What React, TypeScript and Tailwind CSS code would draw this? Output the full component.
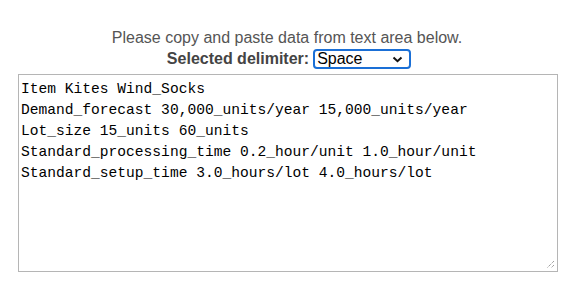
import React from "react";

const data = `Item Kites Wind_Socks
Demand_forecast 30,000_units/year 15,000_units/year
Lot_size 15_units 60_units
Standard_processing_time 0.2_hour/unit 1.0_hour/unit
Standard_setup_time 3.0_hours/lot 4.0_hours/lot`;

export default function App() {
  return (
    <div className="w-[574px] h-[284px] bg-white pt-[28px] font-['Liberation_Sans',Arial,sans-serif] text-[16px]">
      <div className="text-center text-[#555555] leading-[19px]">
        Please copy and paste data from text area below.
      </div>
      <div className="flex items-center justify-center gap-[4px] mt-[1px] h-[21px] pl-[4px]">
        <span className="font-bold text-[#444444] leading-[19px]">Selected delimiter:</span>
        <div className="relative w-[98px] h-[20px] rounded-[4px] border-2 border-[#1a6fd6] bg-white flex items-center">
          <span className="pl-[2px] text-black leading-[16px]">Space</span>
          <svg className="absolute right-[6px] top-[5px]" width="11" height="7" viewBox="0 0 11 7">
            <path d="M1.5 1.5 L5.5 5.2 L9.5 1.5" fill="none" stroke="#111" strokeWidth="2" />
          </svg>
        </div>
      </div>
      <div className="relative ml-[18px] mt-[5px] w-[540px] h-[198px] border border-[#b5b5b5] bg-white">
        <pre className="pl-[2px] pt-[4px] font-['Liberation_Mono',monospace] text-[14.6px] leading-[21px] text-black whitespace-pre m-0">
          {data}
        </pre>
        <svg className="absolute right-[2px] bottom-[2px]" width="9" height="9" viewBox="0 0 9 9">
          <path d="M8 1 L1 8 M8 5 L5 8" stroke="#777" strokeWidth="1" strokeDasharray="1 1" />
        </svg>
      </div>
    </div>
  );
}
